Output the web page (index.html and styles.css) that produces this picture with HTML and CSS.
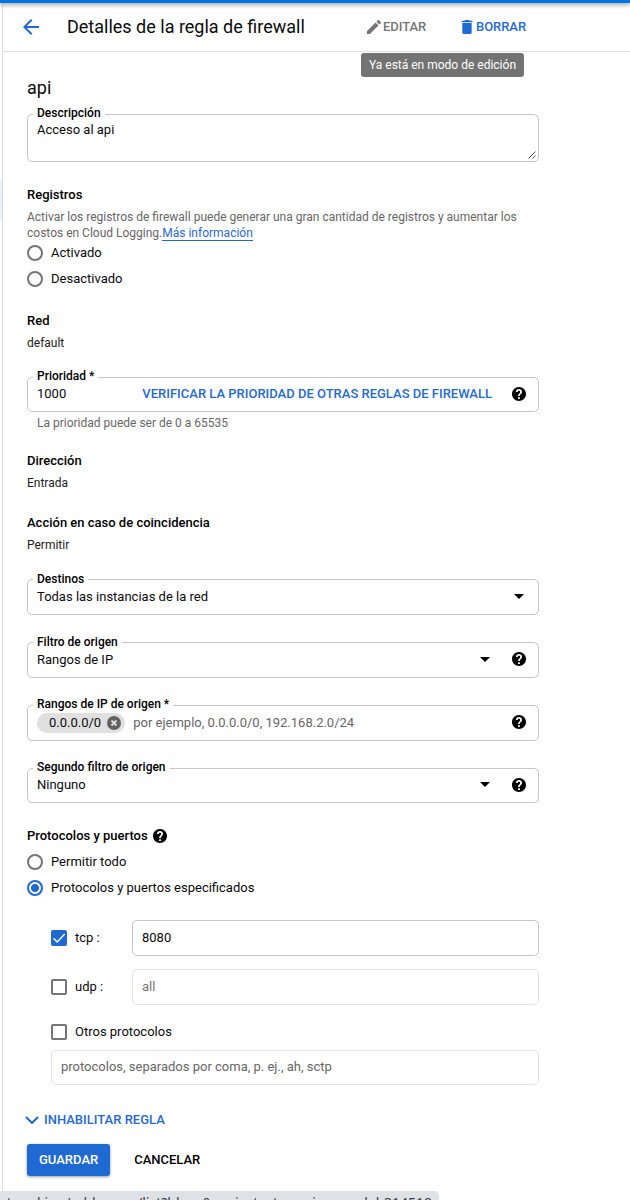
FILE: index.html
```
<!DOCTYPE html>
<html lang="es">
<head>
<meta charset="utf-8">
<title>Detalles de la regla de firewall</title>
<link rel="stylesheet" href="styles.css">
</head>
<body>
<svg class="defs" width="0" height="0">
  <symbol id="help" viewBox="2 2 20 20"><path d="M12 2C6.480 2 2 6.480 2 12s4.480 10 10 10 10-4.480 10-10S17.520 2 12 2zm1.300 17h-2.600v-2.500h2.600V19zm2-7.700l-.9.920C13.600 12.950 13.300 13.500 13.300 15h-2.600v-.5c0-1.100.45-2.100 1.170-2.830l1.240-1.260c.37-.36.59-.86.59-1.410 0-1.100-.7-1.800-1.700-1.800s-1.800.7-1.800 1.800H7.700c0-2.400 1.900-4.200 4.300-4.200s4.300 1.800 4.300 4.200c0 .88-.4 1.700-1 2.300z"/></symbol>
</svg>
<div class="topbar"></div>
<div class="shell">
  <div class="rail"><span class="rail-active"></span></div>
  <div class="page">
    <header class="header">
      <svg class="back" viewBox="4 4 16 16"><path d="M20 11H7.830l5.590-5.590L12 4l-8 8 8 8 1.410-1.410L7.830 13H20v-2z"/></svg>
      <h1>Detalles de la regla de firewall</h1>
      <span class="action edit"><svg viewBox="3 3 18 18"><path d="M3 17.250V21h3.750L17.810 9.940l-3.750-3.750L3 17.250zM20.710 7.040c.39-.39.39-1.020 0-1.410l-2.340-2.340c-.39-.39-1.020-.39-1.410 0l-1.830 1.830 3.750 3.750 1.830-1.830z"/></svg>EDITAR</span>
      <span class="action delete"><svg viewBox="5 3 14 18"><path d="M6 19c0 1.100.9 2 2 2h8c1.100 0 2-.9 2-2V7H6v12zM19 4h-3.500l-1-1h-5l-1 1H5v2h14V4z"/></svg>BORRAR</span>
      <span class="tooltip">Ya está en modo de edición</span>
    </header>
    <main class="form">
      <h2>api</h2>
      <div class="field area"><label>Descripción</label><span>Acceso al api</span>
        <svg class="grip" viewBox="0 0 8 8"><path d="M.5 7.500l7-7M4.500 7.500l3-3"/></svg></div>

      <h3 class="gap-registros">Registros</h3>
      <p class="note">Activar los registros de firewall puede generar una gran cantidad de registros y aumentar los costos en Cloud Logging.<a>Más información</a></p>
      <div class="choice first"><i class="radio"></i>Activado</div>
      <div class="choice"><i class="radio"></i>Desactivado</div>

      <h3 class="gap-red">Red</h3>
      <p class="value">default</p>

      <div class="field low priority"><label class="raised">Prioridad *</label><span>1000</span><b class="verify">VERIFICAR LA PRIORIDAD DE OTRAS REGLAS DE FIREWALL</b><svg class="help"><use href="#help"/></svg></div>
      <p class="hint">La prioridad puede ser de 0 a 65535</p>

      <h3 class="gap-direccion">Dirección</h3>
      <p class="value">Entrada</p>
      <h3 class="gap-accion">Acción en caso de coincidencia</h3>
      <p class="value">Permitir</p>

      <div class="field targets"><label>Destinos</label><span>Todas las instancias de la red</span><i class="caret end"></i></div>
      <div class="field"><label>Filtro de origen</label><span>Rangos de IP</span><i class="caret"></i><svg class="help lift"><use href="#help"/></svg></div>
      <div class="field"><label class="raised">Rangos de IP de origen *</label><span class="chip">0.0.0.0/0<svg viewBox="0 0 14 14"><circle cx="7" cy="7" r="7"/><path d="M4.500 4.500l5 5M9.500 4.500l-5 5"/></svg></span><span class="placeholder">por ejemplo, 0.0.0.0/0, 192.168.2.0/24</span><svg class="help push lift"><use href="#help"/></svg></div>
      <div class="field low"><label class="raised">Segundo filtro de origen</label><span>Ninguno</span><i class="caret"></i><svg class="help"><use href="#help"/></svg></div>

      <h3 class="protocols">Protocolos y puertos<svg class="help"><use href="#help"/></svg></h3>
      <div class="choice all"><i class="radio"></i>Permitir todo</div>
      <div class="choice"><i class="radio on"></i>Protocolos y puertos especificados</div>

      <section class="ports">
        <div class="port"><div class="choice"><i class="box on"><svg viewBox="0 0 16 16"><path d="M2.500 8.200l3.700 3.700L13.700 4"/></svg></i>tcp :</div><div class="field plain">8080</div></div>
        <div class="port"><div class="choice"><i class="box"></i>udp :</div><div class="field plain off disabled">all</div></div>
        <div class="choice others"><i class="box"></i>Otros protocolos</div>
        <div class="field low plain off other-input">protocolos, separados por coma, p. ej., ah, sctp</div>
      </section>

      <div class="disable"><svg viewBox="0 0 14 8"><path d="M1 1l6 6 6-6"/></svg>INHABILITAR REGLA</div>
      <div class="buttons"><button class="primary">GUARDAR</button><button>CANCELAR</button></div>
    </main>
  </div>
</div>
<div class="status"><span>networking/addresses/list?hl=es&amp;project=streaming-model-314519</span></div>
</body>
</html>
```
FILE: styles.css
```
* { box-sizing: border-box; }
body {
  position: relative;
  margin: 0;
  width: 630px;
  height: 1200px;
  overflow: hidden;
  background: #fff;
  color: #0a0a0a;
  font: 13px/16px Roboto, sans-serif;
}
h1, h2, h3, p { margin: 0; }
svg { display: block; flex: none; fill: currentColor; }
.defs { position: absolute; }
.topbar {
  position: relative;
  height: 3px;
  background: #0073e6;
  box-shadow: 0 1px 5px #0009;
}
.shell { display: flex; height: 1197px; }
.rail { flex: none; width: 3px; padding-top: 177px; border-right: 1px solid #dadce0; }
.rail-active { display: block; height: 40px; background: #e8f0fe; }
.page { flex: 1; }

.header {
  position: relative;
  display: flex;
  align-items: center;
  height: 49px;
  padding-left: 20px;
  border-bottom: 1px solid #e0e0e0;
}
.back { width: 16px; height: 16px; color: #1f69d3; }
h1 { width: 300px; margin-left: 28px; font-size: 18px; line-height: 24px; font-weight: 400; white-space: nowrap; }
.action { display: flex; align-items: center; font-weight: 500; letter-spacing: -0.04px; }
.edit { width: 94px; gap: 2px; color: #757575; }
.edit svg { width: 14px; height: 14px; }
.delete { gap: 3px; color: #1f69d3; }
.delete svg { width: 12px; height: 14px; }
.tooltip {
  position: absolute;
  top: 50px;
  left: 358px;
  width: 163px;
  height: 24px;
  border-radius: 3px;
  background: #737373;
  color: #fff;
  font-size: 12px;
  line-height: 24px;
  text-align: center;
  white-space: nowrap;
}

.form { width: 536px; padding: 24px 0 0 24px; }
h2 { font-size: 18px; line-height: 24px; font-weight: 400; }
h3 { font-size: 13px; line-height: 16px; font-weight: 500; color: #000; }
.value { margin-top: 6px; font-size: 12px; color: #212121; }
.note { margin-top: 6px; font-size: 12px; color: #666; }
.note a { color: #1f69d3; border-bottom: 1px solid #1f69d3; }
.gap-registros { margin-top: 25px; }
.gap-red { margin-top: 26px; }
.gap-direccion { margin-top: 22px; }
.gap-accion { margin-top: 24px; }
.hint { margin: 3px 0 0 10px; font-size: 12px; color: #666; }

.field {
  position: relative;
  display: flex;
  align-items: center;
  height: 36px;
  margin-top: 27px;
  padding: 0 12px 0 9px;
  border: 1px solid #c4c6c8;
  border-radius: 5px;
}
.field label {
  position: absolute;
  top: -9px;
  left: 5px;
  padding: 0 4px;
  background: #fff;
  color: #000;
  font-size: 12px;
  font-weight: 500;
  white-space: nowrap;
}
.field .raised { top: -10px; }
.low { height: 35px; padding-bottom: 1px; }
.area { height: 48px; margin-top: 14px; align-items: flex-start; padding-top: 7px; }
.area label { top: -10px; }
.grip { position: absolute; right: 2px; bottom: 2px; width: 8px; height: 8px; fill: none; stroke: #555; stroke-width: 1; }
.priority, .targets { margin-top: 26px; }
.verify { margin: 0 20px 0 auto; color: #1f69d3; font-weight: 500; white-space: nowrap; }
.help { width: 14px; height: 14px; color: #000; }
.push { margin-left: auto; }
.lift { margin-bottom: 2px; }
.caret { flex: none; margin: 0 22px 1px auto; border: 5px solid transparent; border-top-color: #000; border-bottom: 0; }
.caret.end { margin-right: 2px; }
.chip {
  display: flex;
  align-items: center;
  gap: 6px;
  height: 20px;
  margin-right: 8px;
  padding: 0 4px 0 12px;
  border-radius: 10px;
  background: #e0e0e0;
}
.chip svg { width: 14px; height: 14px; color: #616161; }
.chip path { stroke: #e0e0e0; stroke-width: 1.8; }
.placeholder { color: #666; }

.choice { display: flex; align-items: center; gap: 8px; height: 16px; margin-top: 10px; }
.choice.first { margin-top: 4px; }
.radio { flex: none; width: 16px; height: 16px; border: 2px solid #757575; border-radius: 50%; }
.radio.on { border-color: #1f69d3; background: radial-gradient(circle, #1f69d3 3.700px, #fff 4.300px); }
.box { flex: none; width: 16px; height: 16px; border: 2px solid #757575; border-radius: 2px; }
.box.on { border: 0; background: #1f69d3; }
.box svg { width: 16px; height: 16px; fill: none; stroke: #fff; stroke-width: 1.400; }
.protocols { display: flex; align-items: center; gap: 5px; margin-top: 25px; }

.ports { padding: 24px 0 0 24px; }
.port { display: flex; align-items: center; margin-bottom: 13px; }
.port .choice { width: 81px; margin: 0; }
.port .field { flex: 1; margin: 0; }
.off { border-color: #e3e3e3; color: #666; }
.disabled { color: #757575; }
.others { margin-top: 19px; }
.other-input { margin-top: 10px; }

.disable { display: flex; align-items: center; gap: 5px; margin: 27px 0 0 -2px; color: #1f69d3; font-weight: 500; }
.disable svg { width: 14px; height: 8px; fill: none; stroke: currentColor; stroke-width: 2; }
.buttons { display: flex; gap: 12px; margin-top: 16px; }
button { height: 32px; padding: 0 12px; border: 0; border-radius: 3px; background: none; color: #000; font: 500 13px/32px Roboto, sans-serif; }
.primary { background: #1f69d3; color: #fff; box-shadow: 0 1px 3px #0006; }

.status {
  position: absolute;
  left: 0;
  top: 1191px;
  display: flex;
  justify-content: flex-end;
  width: 439px;
  height: 9px;
  padding-right: 7px;
  border-top-right-radius: 5px;
  overflow: hidden;
  background: #dee1e6;
  color: #3c4043;
  font: 14px/18px "Noto Sans", sans-serif;
}
.status span { padding-top: 3px; white-space: nowrap; }
```
